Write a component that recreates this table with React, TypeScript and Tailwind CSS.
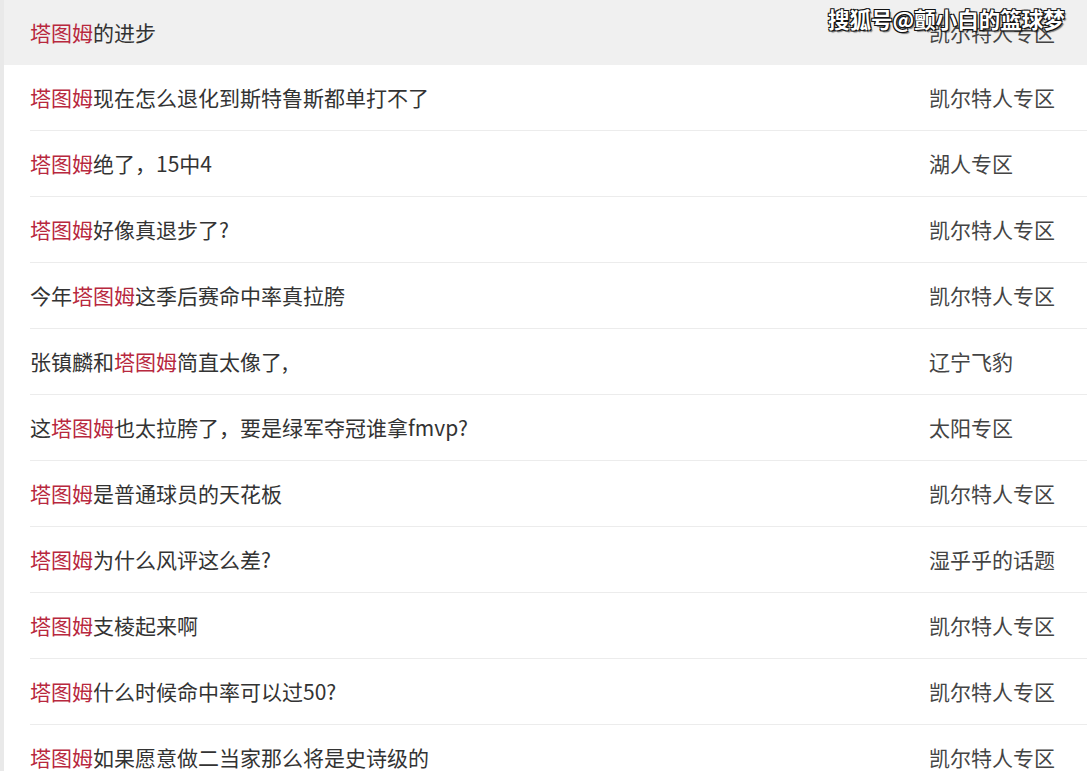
const rows: { pre?: string; post: string; tag: string }[] = [
  { post: "的进步", tag: "凯尔特人专区" },
  { post: "现在怎么退化到斯特鲁斯都单打不了", tag: "凯尔特人专区" },
  { post: "绝了，15中4", tag: "湖人专区" },
  { post: "好像真退步了?", tag: "凯尔特人专区" },
  { pre: "今年", post: "这季后赛命中率真拉胯", tag: "凯尔特人专区" },
  { pre: "张镇麟和", post: "简直太像了,", tag: "辽宁飞豹" },
  { pre: "这", post: "也太拉胯了，要是绿军夺冠谁拿fmvp?", tag: "太阳专区" },
  { post: "是普通球员的天花板", tag: "凯尔特人专区" },
  { post: "为什么风评这么差?", tag: "湿乎乎的话题" },
  { post: "支棱起来啊", tag: "凯尔特人专区" },
  { post: "什么时候命中率可以过50?", tag: "凯尔特人专区" },
  { post: "如果愿意做二当家那么将是史诗级的", tag: "凯尔特人专区" },
];

export default function App() {
  return (
    <div
      className="relative w-[1087px] h-[771px] overflow-hidden bg-white border-l-4 border-[#e9e9e9] text-[21px] text-[#333]"
      style={{ fontFamily: '"Noto Sans CJK SC", "Noto Sans", sans-serif' }}
    >
      {rows.map((r, i) => (
        <div key={i} className={i === 0 ? "bg-[#f0f0f0]" : ""}>
          <div
            className={
              "ml-[26px] grid grid-cols-[1fr_158px] items-center " +
              (i === 0 ? "h-[65px]" : "h-[66px] border-b border-[#ececec]")
            }
          >
            <div className="whitespace-nowrap leading-none">
              {r.pre}
              <span className="text-[#b8283e]">塔图姆</span>
              {r.post}
            </div>
            <div className="whitespace-nowrap leading-none text-[#444]">{r.tag}</div>
          </div>
        </div>
      ))}
      <div
        className="absolute top-[8px] left-[824px] whitespace-nowrap text-[21.5px] font-bold text-white leading-none"
        style={{
          textShadow:
            "1px 1px 0 #111, -1px -1px 0 #111, 1px -1px 0 #111, -1px 1px 0 #111, 2px 2px 1px rgba(0,0,0,0.5)",
        }}
      >
        搜狐号@颤小白的篮球梦
      </div>
    </div>
  );
}
